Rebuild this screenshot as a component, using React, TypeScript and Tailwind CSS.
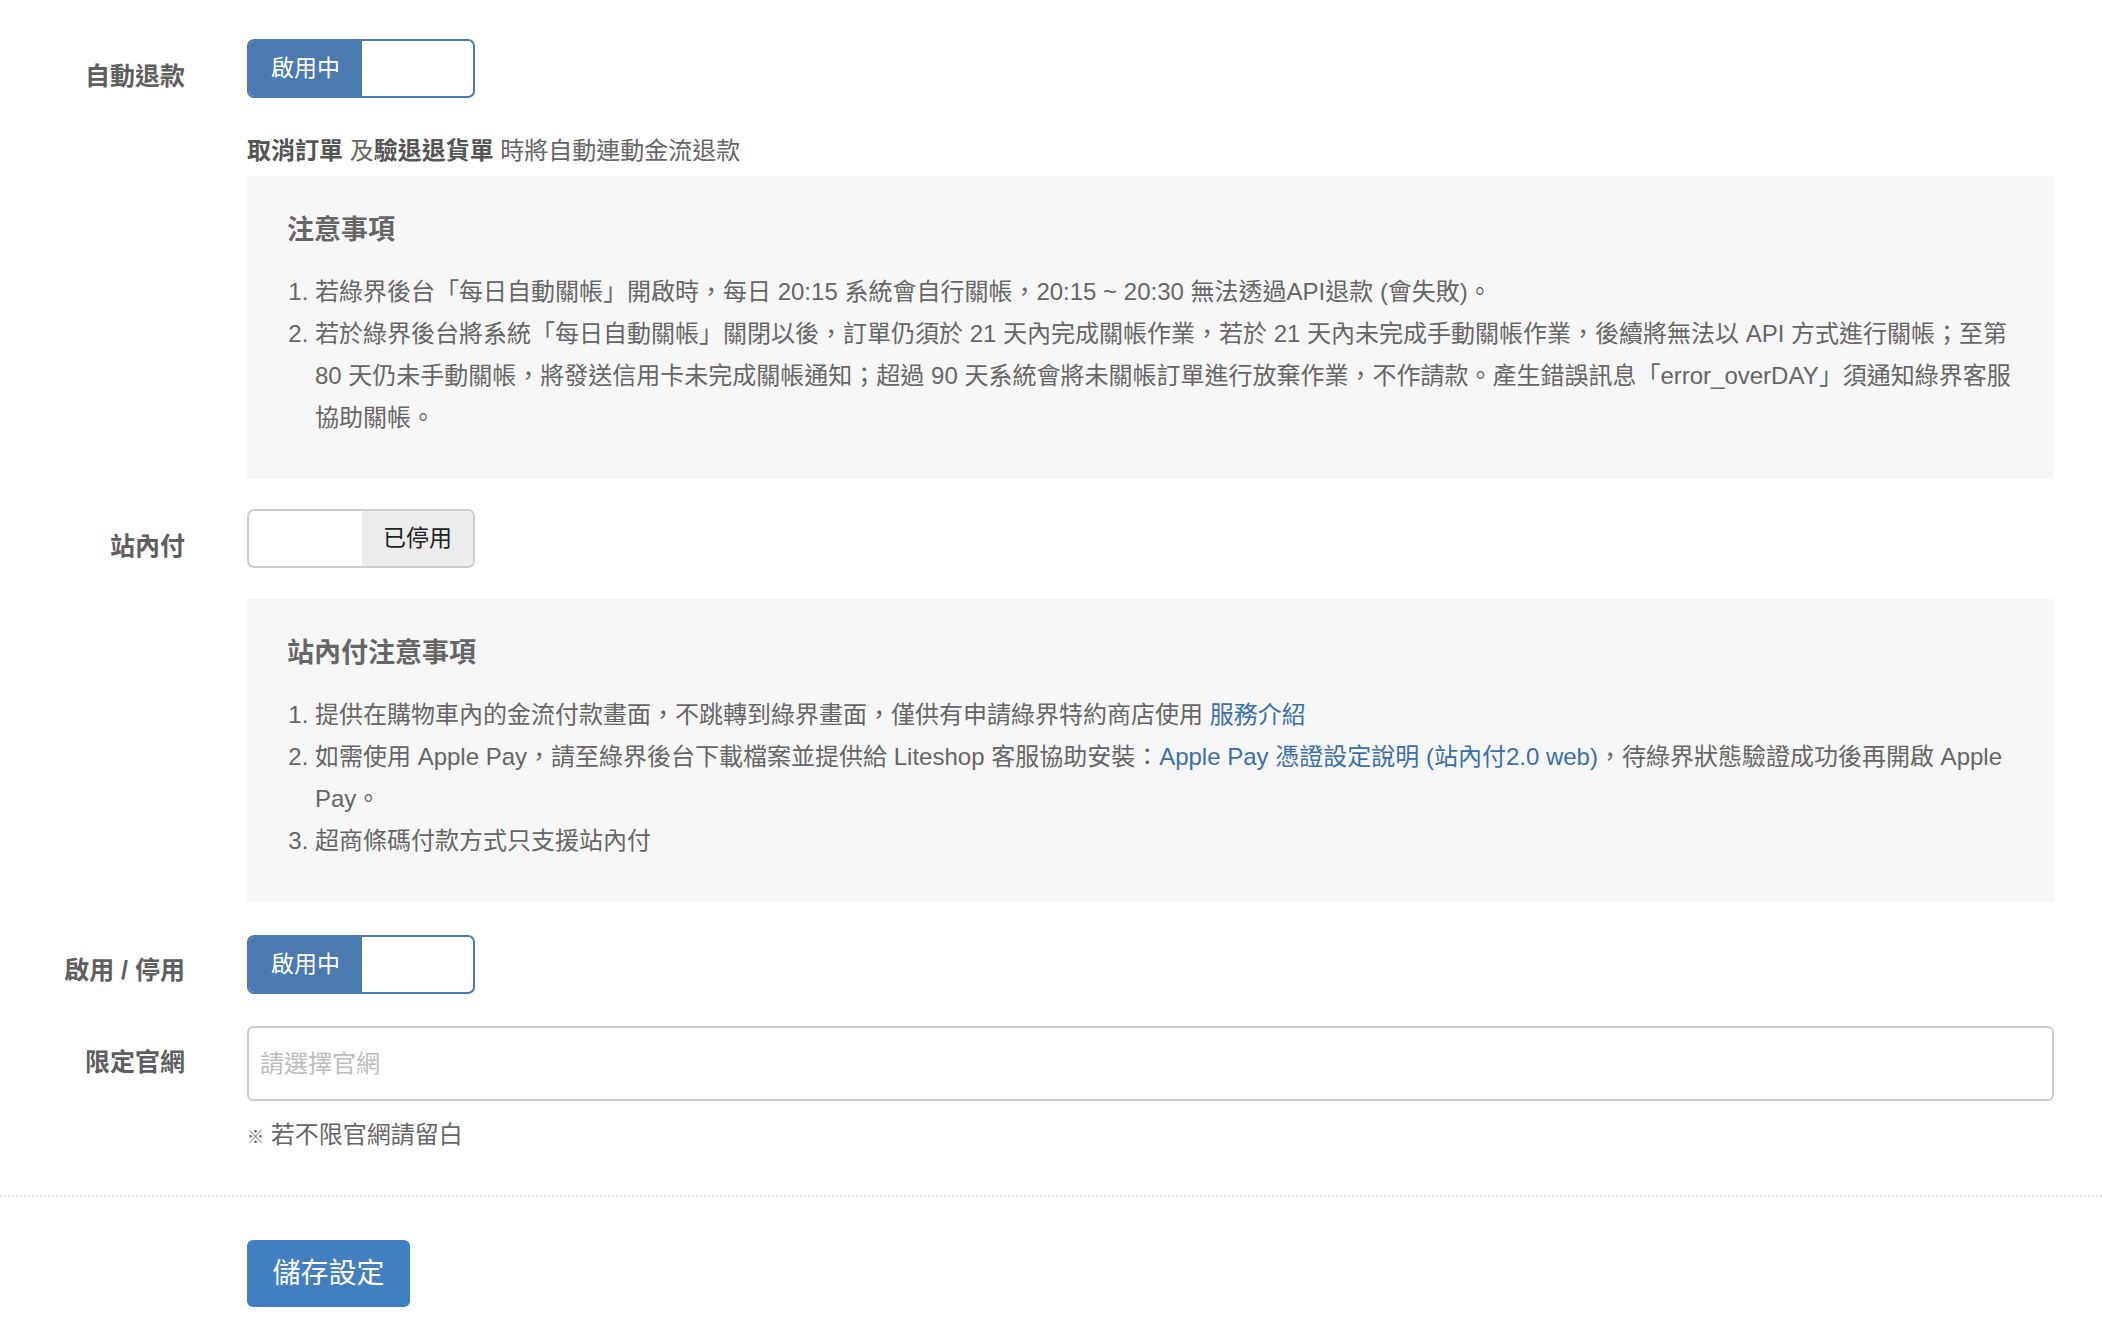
import React from "react";

const font = { fontFamily: '"Liberation Sans", "Noto Sans CJK TC", sans-serif' };

function Toggle({ on }: { on: boolean }) {
    if (on) {
        return (
            <div className="flex h-[59px] w-[228px] overflow-hidden rounded-[7px] border-2 border-[#4a7ab1] bg-white">
                <div className="flex w-[113px] items-center justify-center bg-[#4a7ab1] text-[23px] text-white">
                    啟用中
                </div>
                <div className="flex-1" />
            </div>
        );
    }
    return (
        <div className="flex h-[59px] w-[228px] overflow-hidden rounded-[7px] border-2 border-[#cccccc] bg-white">
            <div className="w-[113px]" />
            <div className="flex flex-1 items-center justify-center bg-[#ececec] text-[23px] text-[#222]">
                已停用
            </div>
        </div>
    );
}

function Label({ children, pt }: { children: React.ReactNode; pt: string }) {
    return (
        <div className={`w-[185px] shrink-0 text-right text-[25px] font-bold text-[#5f5f5f] ${pt}`}>
            {children}
        </div>
    );
}

function Notice({ title, children }: { title: string; children: React.ReactNode }) {
    return (
        <div className="bg-[#f7f7f7] pl-[40px] pr-[16px] pt-[36px] pb-[40px]">
            <div className="text-[27px] font-bold leading-[36px] text-[#666]">{title}</div>
            <ol className="mt-[23px] list-decimal pl-[28px] text-[24px] leading-[42px] text-[#666]">
                {children}
            </ol>
        </div>
    );
}

export default function App() {
    return (
        <div className="min-h-[1340px] bg-white" style={font}>
            <div className="pr-[48px] pt-[39px]">
                {/* 自動退款 */}
                <div className="flex">
                    <Label pt="pt-[19px]">自動退款</Label>
                    <div className="ml-[62px] flex-1">
                        <Toggle on={true} />
                        <div className="mt-[36px] text-[24px] leading-[34px] text-[#666]">
                            <b className="text-[#555]">取消訂單</b> 及<b className="text-[#555]">驗退退貨單</b> 時將自動連動金流退款
                        </div>
                        <div className="mt-[8px]">
                            <Notice title="注意事項">
                                <li>
                                    若綠界後台「每日自動關帳」開啟時，每日 20:15 系統會自行關帳，20:15 ~ 20:30 無法透過API退款 (會失敗)。
                                </li>
                                <li>
                                    若於綠界後台將系統「每日自動關帳」關閉以後，訂單仍須於 21 天內完成關帳作業，若於 21 天內未完成手動關帳作業，後續將無法以 API 方式進行關帳；至第
                                    <br />
                                    80 天仍未手動關帳，將發送信用卡未完成關帳通知；超過 90 天系統會將未關帳訂單進行放棄作業，不作請款。產生錯誤訊息「error_overDAY」須通知綠界客服
                                    <br />
                                    協助關帳。
                                </li>
                            </Notice>
                        </div>
                    </div>
                </div>

                {/* 站內付 */}
                <div className="mt-[30px] flex">
                    <Label pt="pt-[19px]">站內付</Label>
                    <div className="ml-[62px] flex-1">
                        <Toggle on={false} />
                        <div className="mt-[31px]">
                            <Notice title="站內付注意事項">
                                <li>
                                    提供在購物車內的金流付款畫面，不跳轉到綠界畫面，僅供有申請綠界特約商店使用{" "}
                                    <a className="text-[#3b6fae]">服務介紹</a>
                                </li>
                                <li>
                                    如需使用 Apple Pay，請至綠界後台下載檔案並提供給 Liteshop 客服協助安裝：
                                    <a className="text-[#3b6fae]">Apple Pay 憑證設定說明 (站內付2.0 web)</a>
                                    ，待綠界狀態驗證成功後再開啟 Apple
                                    <br />
                                    Pay。
                                </li>
                                <li>超商條碼付款方式只支援站內付</li>
                            </Notice>
                        </div>
                    </div>
                </div>

                {/* 啟用 / 停用 */}
                <div className="mt-[33px] flex">
                    <Label pt="pt-[17px]">啟用 / 停用</Label>
                    <div className="ml-[62px] flex-1">
                        <Toggle on={true} />
                    </div>
                </div>

                {/* 限定官網 */}
                <div className="mt-[32px] flex">
                    <Label pt="pt-[18px]">限定官網</Label>
                    <div className="ml-[62px] flex-1">
                        <input
                            placeholder="請選擇官網"
                            className="h-[75px] w-full rounded-[6px] border-2 border-[#cccccc] px-[11px] text-[24px] text-[#555] outline-none placeholder:text-[#bdbdbd]"
                        />
                        <div className="mt-[18px] text-[24px] leading-[32px] text-[#666]">
                            <span className="text-[17px] font-bold">※</span> 若不限官網請留白
                        </div>
                    </div>
                </div>
            </div>

            <div className="mt-[41px] border-t-2 border-dotted border-[#e3e3e3]" />

            <div className="pl-[247px] pt-[43px]">
                <button className="h-[67px] w-[163px] rounded-[6px] bg-[#4080c1] text-[28px] text-white">
                    儲存設定
                </button>
            </div>
        </div>
    );
}
